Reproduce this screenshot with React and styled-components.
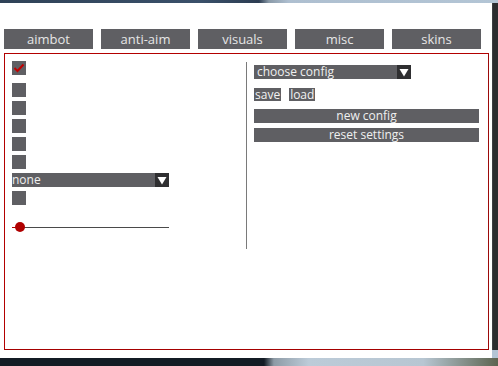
import React, { useState } from 'react';
import styled, { createGlobalStyle } from 'styled-components';

const Global = createGlobalStyle`
  html, body { margin: 0; padding: 0; }
  body {
    width: 498px;
    height: 366px;
    overflow: hidden;
    font-family: "Open Sans", "DejaVu Sans", sans-serif;
  }
`;

const Desktop = styled.div`
  width: 498px;
  height: 366px;
  padding-top: 3px;
  box-sizing: border-box;
  display: flex;
  background: linear-gradient(
    90deg,
    #2f4257 0%,
    #3a506a 40%,
    #2c3d52 52%,
    #8a9aa8 54%,
    #aebfd0 58%,
    #b3c5d5 100%
  );
`;

const Bottom = styled.div`
  position: absolute;
  left: 0;
  top: 358px;
  width: 498px;
  height: 8px;
  background: linear-gradient(90deg, #131b24 0%, #131b24 53%, #8e9ba6 55%, #bccbd8 62%, #b7c6d2 85%, #5c6450 100%);
`;

const Window = styled.div`
  width: 492px;
  height: 355px;
  background: #fff;
  box-sizing: border-box;
  padding: 26px 0 0 4px;
  display: flex;
  flex-direction: column;
`;

const Rail = styled.div`
  width: 6px;
  height: 347px;
  background: #2c2d2f;
  border-left: 1px solid #3d3f42;
  box-sizing: border-box;
`;

const Tabs = styled.div`
  display: flex;
  gap: 8px;
`;

const Tab = styled.button`
  width: 89px;
  height: 20px;
  border: none;
  padding: 0;
  background: ${(p) => (p.$active ? '#55555a' : '#5f5f63')};
  color: #e6e6e6;
  font-family: "Open Sans", "DejaVu Sans", sans-serif;
  font-size: 13px;
  line-height: 20px;
  cursor: pointer;
`;

const Panel = styled.div`
  margin-top: 4px;
  width: 485px;
  height: 297px;
  box-sizing: border-box;
  border: 1px solid #b30000;
  border-right-color: #9c0a0a;
  border-bottom-color: #a50000;
  padding: 7px 0 0 7px;
  display: flex;
`;

const LeftCol = styled.div`
  width: 234px;
  display: flex;
  flex-direction: column;
  gap: 4px;
`;

const Divider = styled.div`
  width: 1px;
  height: 187px;
  margin-top: 1px;
  background: #7a7a7a;
`;

const RightCol = styled.div`
  width: 225px;
  padding: 4px 0 0 7px;
  display: flex;
  flex-direction: column;
`;

const Check = styled.div`
  width: 14px;
  height: 14px;
  background: #5f5f63;
  margin-bottom: ${(p) => p.$mb || 0}px;
  display: flex;
  align-items: center;
  justify-content: center;
`;

const Select = styled.div`
  width: ${(p) => p.$w}px;
  height: 14px;
  background: #5f5f63;
  color: #f0f0f0;
  font-size: 12px;
  line-height: 14px;
  display: flex;
  justify-content: space-between;
  padding-left: ${(p) => p.$pad || 0}px;
  box-sizing: border-box;
  margin-bottom: ${(p) => p.$mb || 0}px;
`;

const Arrow = styled.div`
  width: 14px;
  height: 14px;
  background: #2f2f31;
  display: flex;
  align-items: center;
  justify-content: center;
`;

const Slider = styled.div`
  position: relative;
  width: 157px;
  height: 1px;
  background: #4a4a4a;
  margin-top: 18px;
`;

const Fill = styled.div`
  height: 1px;
  background: #b00000;
`;

const Knob = styled.div`
  position: absolute;
  top: -5px;
  width: 10px;
  height: 10px;
  border-radius: 50%;
  background: #b00000;
`;

const SmallRow = styled.div`
  display: flex;
  gap: 8px;
  margin: 9px 0 8px;
`;

const Small = styled.button`
  height: 13px;
  border: none;
  padding: 0 1px;
  background: #5f5f63;
  color: #f2f2f2;
  font-family: "Open Sans", "DejaVu Sans", sans-serif;
  font-size: 12px;
  line-height: 13px;
`;

const Wide = styled.button`
  width: 225px;
  height: 14px;
  border: none;
  padding: 0;
  background: #5f5f63;
  color: #f0f0f0;
  font-family: "Open Sans", "DejaVu Sans", sans-serif;
  font-size: 12px;
  line-height: 14px;
  margin-bottom: 5px;
`;

const Tick = () => (
  <svg width="12" height="10" viewBox="0 0 12 10">
    <polyline points="1.5,5 4.5,8 10.5,1.5" fill="none" stroke="#c00000" strokeWidth="2" />
  </svg>
);

const Down = () => (
  <svg width="10" height="9" viewBox="0 0 10 9">
    <polygon points="0.5,1 9.5,1 5,8.5" fill="#fff" />
  </svg>
);

const tabs = ['aimbot', 'anti-aim', 'visuals', 'misc', 'skins'];

export default function App() {
  const [tab, setTab] = useState('aimbot');
  const value = 5;

  return (
    <>
      <Global />
      <Desktop>
        <Window>
          <Tabs>
            {tabs.map((t) => (
              <Tab key={t} $active={false} onClick={() => setTab(t)}>
                {t}
              </Tab>
            ))}
          </Tabs>
          <Panel>
            <LeftCol>
              <Check $mb={4}>
                <Tick />
              </Check>
              <Check />
              <Check />
              <Check />
              <Check />
              <Check />
              <Select $w={157}>
                <span>none</span>
                <Arrow>
                  <Down />
                </Arrow>
              </Select>
              <Check />
              <Slider>
                <Fill style={{ width: `${value}%` }} />
                <Knob style={{ left: 3 }} />
              </Slider>
            </LeftCol>
            <Divider />
            <RightCol>
              <Select $w={157} $pad={3}>
                <span>choose config</span>
                <Arrow>
                  <Down />
                </Arrow>
              </Select>
              <SmallRow>
                <Small>save</Small>
                <Small>load</Small>
              </SmallRow>
              <Wide>new config</Wide>
              <Wide>reset settings</Wide>
            </RightCol>
          </Panel>
        </Window>
        <Rail />
        <Bottom />
      </Desktop>
    </>
  );
}
